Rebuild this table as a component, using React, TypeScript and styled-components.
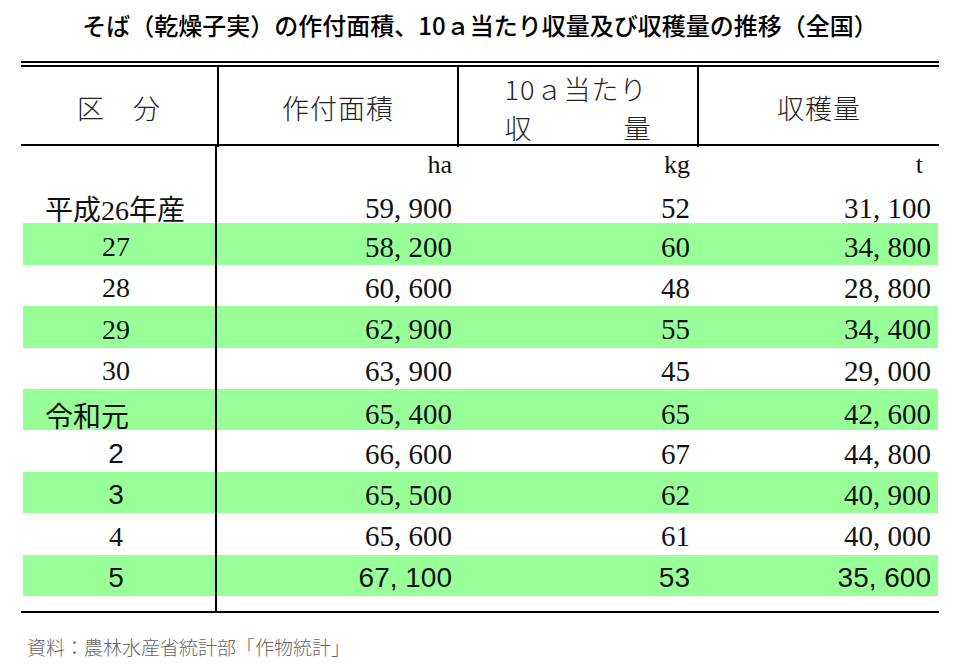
import React from 'react';
import styled, { createGlobalStyle, css } from 'styled-components';

const GlobalStyle = createGlobalStyle`
  html, body {
    margin: 0;
    padding: 0;
    background: #ffffff;
  }
`;

const SERIF = `"Liberation Serif", "Noto Sans CJK JP", serif`;
const SANS = `"Liberation Sans", "Noto Sans CJK JP", sans-serif`;
const GREEN = '#99ff99';
const COLS = '196px 240px 240px 242px';

const Page = styled.div`
  width: 960px;
  height: 668px;
  overflow: hidden;
  font-family: ${SERIF};
  color: #111;
`;

const Title = styled.h1`
  margin: 0;
  height: 61px;
  padding-top: 11px;
  box-sizing: border-box;
  text-align: center;
  font-family: "Noto Sans CJK JP", sans-serif;
  font-size: 24px;
  line-height: 28px;
  font-weight: 500;
  color: #000;
`;

const Table = styled.div`
  margin: 0 21px;
  border-top: 6px double #000;
  border-bottom: 2px solid #000;
`;

const HeaderRow = styled.div`
  display: grid;
  grid-template-columns: ${COLS};
  height: 77px;
  border-bottom: 2px solid #000;
`;

const HeaderCell = styled.div<{ $divider?: boolean }>`
  display: flex;
  align-items: center;
  justify-content: center;
  font-family: "Noto Sans CJK JP", serif;
  font-size: 27px;
  font-weight: 300;
  letter-spacing: 1px;
  color: #222;
  ${(p) =>
    p.$divider &&
    css`
      border-left: 2px solid #000;
    `}
`;

const StackedHead = styled.div`
  display: flex;
  flex-direction: column;
  line-height: 39px;
  margin-top: 2px;
`;

const HeadLine = styled.div`
  display: flex;
  justify-content: space-between;
  width: 147px;
`;

const BodyRow = styled.div<{ $green?: boolean; $h: number }>`
  display: grid;
  grid-template-columns: ${COLS};
  height: ${(p) => p.$h}px;
  align-items: center;
  ${(p) =>
    p.$green &&
    css`
      background: linear-gradient(${GREEN}, ${GREEN}) 2px 0 / calc(100% - 3px) 100% no-repeat;
    `}
`;

const LabelCell = styled.div<{ $left?: boolean; $sans?: boolean }>`
  height: 100%;
  display: flex;
  align-items: center;
  justify-content: ${(p) => (p.$left ? 'flex-start' : 'center')};
  padding-left: ${(p) => (p.$left ? '24px' : '0')};
  padding-right: ${(p) => (p.$left ? '0' : '4px')};
  padding-top: 6px;
  border-right: 2px solid #000;
  box-sizing: border-box;
  font-family: ${(p) => (p.$sans ? SANS : SERIF)};
  font-size: 28px;
`;

const NumCell = styled.div<{ $sans?: boolean; $pad: number }>`
  text-align: right;
  padding-right: ${(p) => p.$pad}px;
  padding-top: 6px;
  font-family: ${(p) => (p.$sans ? SANS : SERIF)};
  font-size: ${(p) => (p.$sans ? 28 : 29)}px;
  line-height: 1;
`;

const UnitCell = styled(NumCell)`
  font-size: 26px;
  padding-top: 2px;
`;

const Source = styled.div`
  margin: 20px 0 0 27px;
  font-family: "Noto Sans CJK JP", serif;
  font-size: 19px;
  font-weight: 300;
  color: #666;
`;

type Row = {
  label: string;
  area: string;
  yieldKg: string;
  harvest: string;
  left?: boolean;
  sans?: boolean;
  sansNums?: boolean;
};

const ROWS: Row[] = [
  { label: '平成26年産', area: '59, 900', yieldKg: '52', harvest: '31, 100', left: true },
  { label: '27', area: '58, 200', yieldKg: '60', harvest: '34, 800' },
  { label: '28', area: '60, 600', yieldKg: '48', harvest: '28, 800' },
  { label: '29', area: '62, 900', yieldKg: '55', harvest: '34, 400' },
  { label: '30', area: '63, 900', yieldKg: '45', harvest: '29, 000' },
  { label: '令和元', area: '65, 400', yieldKg: '65', harvest: '42, 600', left: true, sans: true },
  { label: '2', area: '66, 600', yieldKg: '67', harvest: '44, 800', sans: true },
  { label: '3', area: '65, 500', yieldKg: '62', harvest: '40, 900', sans: true },
  { label: '4', area: '65, 600', yieldKg: '61', harvest: '40, 000' },
  { label: '5', area: '67, 100', yieldKg: '53', harvest: '35, 600', sans: true, sansNums: true },
];

const App = () => {
  return (
    <>
      <GlobalStyle />
      <Page>
        <Title>そば（乾燥子実）の作付面積、10ａ当たり収量及び収穫量の推移（全国）</Title>
        <Table>
          <HeaderRow>
            <HeaderCell>区　分</HeaderCell>
            <HeaderCell $divider>作付面積</HeaderCell>
            <HeaderCell $divider>
              <StackedHead>
                <HeadLine>
                  <span>10ａ当たり</span>
                </HeadLine>
                <HeadLine>
                  <span>収</span>
                  <span>量</span>
                </HeadLine>
              </StackedHead>
            </HeaderCell>
            <HeaderCell $divider>収穫量</HeaderCell>
          </HeaderRow>

          <BodyRow $h={36}>
            <LabelCell />
            <UnitCell $pad={5}>ha</UnitCell>
            <UnitCell $pad={7}>kg</UnitCell>
            <UnitCell $pad={16}>t</UnitCell>
          </BodyRow>

          {ROWS.map((r, i) => (
            <BodyRow key={r.label} $h={41.4} $green={i % 2 === 1}>
              <LabelCell $left={r.left} $sans={r.sans}>
                {r.label}
              </LabelCell>
              <NumCell $pad={5} $sans={r.sansNums}>
                {r.area}
              </NumCell>
              <NumCell $pad={7} $sans={r.sansNums}>
                {r.yieldKg}
              </NumCell>
              <NumCell $pad={8} $sans={r.sansNums}>
                {r.harvest}
              </NumCell>
            </BodyRow>
          ))}

          <BodyRow $h={15}>
            <LabelCell />
          </BodyRow>
        </Table>
        <Source>資料：農林水産省統計部「作物統計」</Source>
      </Page>
    </>
  );
};

export default App;
